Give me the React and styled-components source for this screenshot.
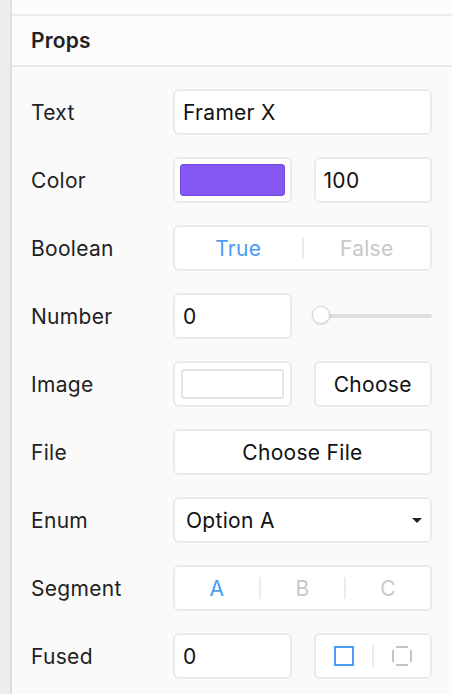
import React from "react";
import styled, { createGlobalStyle } from "styled-components";

const GlobalStyle = createGlobalStyle`
  html, body {
    margin: 0;
    padding: 0;
    background: #fafafa;
  }
  body {
    font-family: Inter, "Noto Sans", "Liberation Sans", sans-serif;
    color: #222;
  }
`;

const Page = styled.div`
  display: flex;
  height: 694px;
  overflow: hidden;
`;

const Gutter = styled.div`
  width: 10px;
  flex-shrink: 0;
  background: #ededed;
  border-right: 2px solid #dedede;
`;

const Panel = styled.div`
  flex: 1;
  display: flex;
  flex-direction: column;
  background: #fafafa;
`;

const TopStrip = styled.div`
  height: 14px;
  background: #fcfcfc;
  border-bottom: 2px solid #ebebeb;
`;

const Header = styled.div`
  height: 49px;
  display: flex;
  align-items: center;
  padding-left: 19px;
  font-size: 21px;
  font-weight: 600;
  letter-spacing: 0.2px;
  color: #222;
  background: #fcfcfc;
  border-bottom: 2px solid #ebebeb;
`;

const Rows = styled.div`
  display: flex;
  flex-direction: column;
  gap: 22px;
  padding: 22px 20px 0 19px;
`;

const Row = styled.div`
  display: grid;
  grid-template-columns: 142px 1fr;
  align-items: center;
  height: 46px;
`;

const Label = styled.div`
  font-size: 21px;
  letter-spacing: 0.3px;
  color: #222;
`;

const Controls = styled.div`
  display: grid;
  grid-template-columns: ${(p) => (p.split ? "1fr 1fr" : "1fr")};
  column-gap: 22px;
  height: 46px;
`;

const Box = styled.div`
  box-sizing: border-box;
  height: 46px;
  background: #fff;
  border: 2px solid #ebebeb;
  border-radius: 6px;
  display: flex;
  align-items: center;
  padding: ${(p) => p.inset || "0 8px"};
  font-size: 21px;
  letter-spacing: 0.3px;
  color: #111;
  justify-content: ${(p) => (p.center ? "center" : "flex-start")};
`;

const Swatch = styled.div`
  flex: 1;
  align-self: stretch;
  border-radius: 3px;
  background: ${(p) => p.color};
  border: ${(p) => p.edgeWidth || 1}px solid ${(p) => p.edge};
  box-sizing: border-box;
`;

const Segmented = styled(Box)`
  padding: 0;
`;

const Segment = styled.div`
  flex: 1;
  display: flex;
  justify-content: center;
  align-items: center;
  font-size: 21px;
  color: ${(p) => (p.active ? "#4a9cf3" : "#c8c8c8")};
`;

const Divider = styled.div`
  width: 2px;
  height: 22px;
  background: #ebebeb;
`;

const SliderWrap = styled.div`
  position: relative;
  display: flex;
  align-items: center;
  height: 46px;
`;

const Track = styled.div`
  flex: 1;
  height: 4px;
  border-radius: 2px;
  background: #dedede;
`;

const Thumb = styled.div`
  position: absolute;
  left: -2px;
  top: 50%;
  width: 18px;
  height: 18px;
  margin-top: -10px;
  box-sizing: border-box;
  border-radius: 50%;
  background: #fff;
  border: 1px solid #d2d2d2;
  box-shadow: 0 1px 2px rgba(0, 0, 0, 0.12);
`;

const Caret = styled.div`
  margin-left: auto;
  margin-right: 0;
  width: 0;
  height: 0;
  border-left: 5px solid transparent;
  border-right: 5px solid transparent;
  border-top: 5px solid #222;
`;

const SelectText = styled.span`
  padding-left: 3px;
`;

function SquareIcon({ dashed }) {
  return dashed ? (
    <svg width="20" height="20" viewBox="0 0 20 20" fill="none">
      <path
        d="M4 1H16M19 4V16M16 19H4M1 16V4"
        stroke="#c4c4c4"
        strokeWidth="2"
      />
    </svg>
  ) : (
    <svg width="20" height="20" viewBox="0 0 20 20" fill="none">
      <rect x="1" y="1" width="18" height="18" stroke="#4a9cf3" strokeWidth="2" />
    </svg>
  );
}

export default function App() {
  return (
    <Page>
      <GlobalStyle />
      <Gutter />
      <Panel>
        <TopStrip />
        <Header>Props</Header>
        <Rows>
          <Row>
            <Label>Text</Label>
            <Controls>
              <Box>Framer X</Box>
            </Controls>
          </Row>
          <Row>
            <Label>Color</Label>
            <Controls split>
              <Box inset="5px">
                <Swatch color="#8658f3" edge="#7446e0" />
              </Box>
              <Box>100</Box>
            </Controls>
          </Row>
          <Row>
            <Label>Boolean</Label>
            <Controls>
              <Segmented>
                <Segment active>True</Segment>
                <Divider />
                <Segment>False</Segment>
              </Segmented>
            </Controls>
          </Row>
          <Row>
            <Label>Number</Label>
            <Controls split>
              <Box>0</Box>
              <SliderWrap>
                <Track />
                <Thumb />
              </SliderWrap>
            </Controls>
          </Row>
          <Row>
            <Label>Image</Label>
            <Controls split>
              <Box inset="6px 6px">
                <Swatch color="#fff" edge="#e4e4e4" edgeWidth={2} />
              </Box>
              <Box center>Choose</Box>
            </Controls>
          </Row>
          <Row>
            <Label>File</Label>
            <Controls>
              <Box center>Choose File</Box>
            </Controls>
          </Row>
          <Row>
            <Label>Enum</Label>
            <Controls>
              <Box>
                <SelectText>Option A</SelectText>
                <Caret />
              </Box>
            </Controls>
          </Row>
          <Row>
            <Label>Segment</Label>
            <Controls>
              <Segmented>
                <Segment active>A</Segment>
                <Divider />
                <Segment>B</Segment>
                <Divider />
                <Segment>C</Segment>
              </Segmented>
            </Controls>
          </Row>
          <Row>
            <Label>Fused</Label>
            <Controls split>
              <Box>0</Box>
              <Segmented>
                <Segment>
                  <SquareIcon />
                </Segment>
                <Divider />
                <Segment>
                  <SquareIcon dashed />
                </Segment>
              </Segmented>
            </Controls>
          </Row>
        </Rows>
      </Panel>
    </Page>
  );
}
